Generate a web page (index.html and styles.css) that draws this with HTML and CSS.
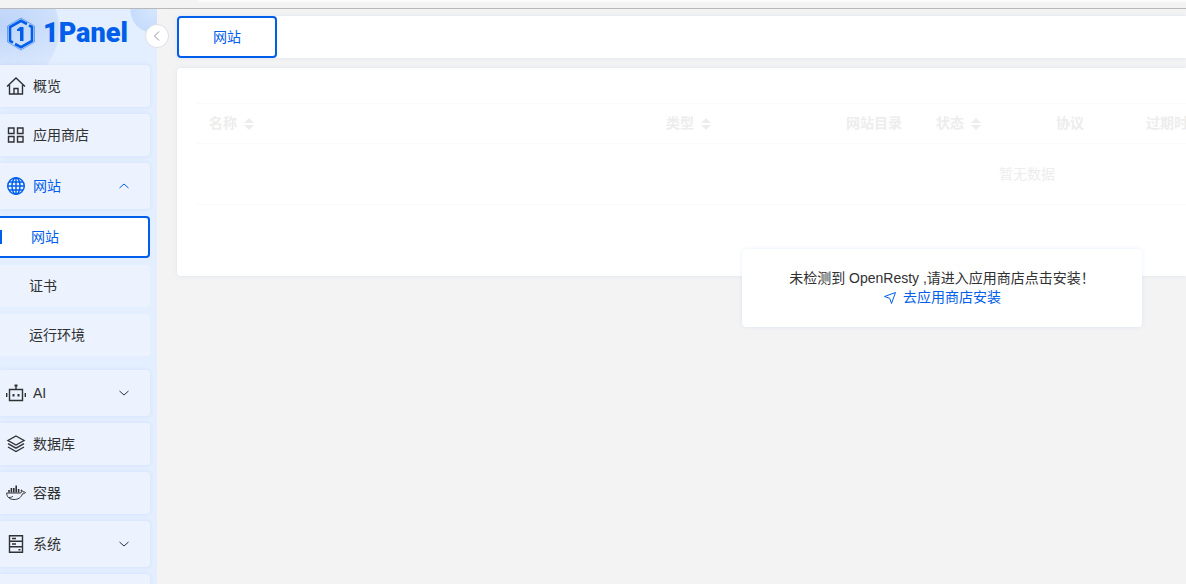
FILE: index.html
```html
<!DOCTYPE html>
<html lang="zh-CN">
<head>
  <meta charset="UTF-8" />
  <meta name="viewport" content="width=device-width, initial-scale=1" />
  <title>网站 - 1Panel</title>
  <link rel="stylesheet" href="styles.css">
</head>
<body>
  <div class="topbar"><div class="topbar-field"></div></div>

  <div class="app">
    <aside class="sidebar">
      <a class="logo" href="#">
        <svg width="30" height="34" viewBox="0 0 30 34" fill="none" stroke="#005eeb">
          <path d="M15 1 28.500 9V25L15 33 1.500 25V9Z" stroke-width=".8" opacity=".6" />
          <path d="M21 7 15 3.800 4 10V24L7 25.700" stroke-width="2.600" />
          <path d="M9 27 15 30.200 26 24V10L23 8.300" stroke-width="2.600" />
          <path d="M11 12.500 14 10H17.500V24H14V14H11Z" fill="#005eeb" stroke="none" />
        </svg>
        <span>1Panel</span>
      </a>
      <button class="collapse" type="button" aria-label="收起菜单">
        <svg width="12" height="12" viewBox="0 0 12 12"><path d="M8 1.500 3.500 6 8 10.500" /></svg>
      </button>

      <nav class="menu">
        <a class="item" href="#">
          <svg class="icon" viewBox="0 0 20 20"><path d="M1 10.500 10 2l9 8.500M3.500 9v9h13V9M8 18v-5.500h4V18" /></svg>
          <span>概览</span>
        </a>
        <a class="item" href="#">
          <svg class="icon" viewBox="0 0 20 20"><path d="M2.500 3h5.500v5.500H2.500zM11.500 3H17v5.500h-5.500zM2.500 11.500h5.500V17H2.500zM11.500 11.500H17V17h-5.500z" /></svg>
          <span>应用商店</span>
        </a>
        <a class="item parent active" href="#">
          <svg class="icon" viewBox="0 0 20 20"><circle cx="10" cy="10" r="8.300" /><ellipse cx="10" cy="10" rx="4" ry="8.300" /><path d="M10 1.700v16.600M1.700 10h16.600M3 6h14M3 14h14" /></svg>
          <span>网站</span>
          <svg class="arrow" viewBox="0 0 12 12"><path d="M1.500 8 6 4l4.500 4" /></svg>
        </a>
        <div class="submenu">
          <a class="item sub current" href="#">网站</a>
          <a class="item sub" href="#">证书</a>
          <a class="item sub" href="#">运行环境</a>
        </div>
        <a class="item parent" href="#">
          <svg class="icon" viewBox="0 0 20 20"><path d="M3.500 6.500h13v11h-13zM10 6.500V2M.700 10v4M19.300 10v4" /><path d="M8.500 1.500h3v2h-3zM6.500 11h2v2.500h-2zM11.500 11h2v2.500h-2z" class="solid" /></svg>
          <span>AI</span>
          <svg class="arrow" viewBox="0 0 12 12"><path d="M1.500 4 6 8l4.500-4" /></svg>
        </a>
        <a class="item" href="#">
          <svg class="icon" viewBox="0 0 20 20"><path d="M10 2 18 6.500 10 11 2 6.500ZM2 9.700l8 4.500 8-4.500M2 13l8 4.500 8-4.500" /></svg>
          <span>数据库</span>
        </a>
        <a class="item" href="#">
          <svg class="icon thin" viewBox="0 0 20 20"><path class="solid" d="M2.200 7h1.600v2.500H2.200zM4.600 5h1.600v4.500H4.600zM7 5h1.600v4.500H7zM9.400 2.500H11v7H9.400zM11.800 6h1.600v3.500h-1.600z" /><path d="M.700 10h13.500c1.500 0 1.500-1.500.8-3 1.500.3 2 1.300 2 2 1-.3 1.800 0 2.500.5-.8 1-1.700 1.300-3 1.300-1.500 4-4.500 5.700-8.500 5.700C3.500 16.500.7 14 .7 10ZM3 14.500c2 0 3-.5 4-1.300" /></svg>
          <span>容器</span>
        </a>
        <a class="item parent" href="#">
          <svg class="icon" viewBox="0 0 20 20"><path d="M3.500 1.700h13v16.600h-13zM3.500 7.200h13M3.500 12.800h13M6 4.500h4M6 10h4" /><path class="solid" d="M12.500 15h2v1.500h-2z" /></svg>
          <span>系统</span>
          <svg class="arrow" viewBox="0 0 12 12"><path d="M1.500 4 6 8l4.500-4" /></svg>
        </a>
        <a class="item" href="#" aria-label="更多"></a>
      </nav>
    </aside>

    <main class="main">
      <div class="tabs">
        <button class="tab" type="button">网站</button>
      </div>

      <section class="card">
        <table class="table">
          <colgroup>
            <col class="col-name"><col class="col-type"><col class="col-dir"><col class="col-status"><col class="col-protocol"><col>
          </colgroup>
          <thead>
            <tr>
              <th>名称<span class="sort"></span></th>
              <th>类型<span class="sort"></span></th>
              <th>网站目录</th>
              <th>状态<span class="sort"></span></th>
              <th>协议</th>
              <th>过期时间</th>
            </tr>
          </thead>
          <tbody>
            <tr><td colspan="6">暂无数据</td></tr>
          </tbody>
        </table>
      </section>

      <div class="prompt">
        <div>未检测到 OpenResty ,请进入应用商店点击安装！</div>
        <a href="#">
          <svg width="14" height="14" viewBox="0 0 14 14"><path d="M1.500 5.500 12.500 1.500 8.500 12.500 6.700 7.300Z" /></svg>
          <span>去应用商店安装</span>
        </a>
      </div>
    </main>
  </div>
</body>
</html>
```

FILE: styles.css
```css
* {
  box-sizing: border-box;
}

body {
  display: flex;
  flex-direction: column;
  height: 100vh;
  margin: 0;
  overflow: hidden;
  background: #f3f3f3;
  color: #303133;
  font-family: "Liberation Sans", "Noto Sans CJK SC", sans-serif;
  font-size: 14px;
  line-height: 19px;
}

a {
  color: inherit;
  text-decoration: none;
}

svg {
  flex: none;
}

.topbar {
  flex: none;
  height: 9px;
  padding-left: 198px;
  border-bottom: 1px solid #b8b8b8;
}

.topbar-field {
  height: 2px;
  background: #fafafa;
}

.app {
  display: flex;
  flex: 1;
  min-height: 0;
}

/* Sidebar */
.sidebar {
  position: relative;
  flex: none;
  width: 157px;
  background:
    radial-gradient(circle at 153px 1px, #d5e5fd 0, #c6dcfc 22px, transparent 23px),
    linear-gradient(#e3eefe00 20px, #e3eefe 90px),
    radial-gradient(circle at 0 20px, #bdd4f9 0, #cfe0fb 58px, transparent 60px),
    #e3eefe;
}

.logo {
  display: flex;
  align-items: center;
  gap: 7px;
  height: 49px;
  padding-left: 6px;
  color: #005eeb;
  font-family: Roboto, sans-serif;
  font-size: 27px;
  font-weight: 900;
}

.collapse {
  position: absolute;
  top: 15px;
  right: -12px;
  z-index: 2;
  display: flex;
  align-items: center;
  justify-content: center;
  width: 24px;
  height: 24px;
  padding: 0;
  border: 1px solid #dcdfe6;
  border-radius: 50%;
  background: #fff;
}

.collapse path {
  fill: none;
  stroke: #909399;
}

.menu {
  display: flex;
  flex-direction: column;
  gap: 7px;
  height: calc(100% - 49px);
  padding: 7px 7px 0 0;
  overflow: hidden;
}

.item {
  display: flex;
  flex: none;
  align-items: center;
  gap: 7px;
  height: 42px;
  padding: 0 20px 0 6px;
  border-radius: 0 4px 4px 0;
  background: #ecf3fe;
  box-shadow: 0 0 4px rgba(0, 94, 235, 0.08);
}

.parent {
  height: 46px;
}

.active,
.current {
  color: #005eeb;
}

.submenu {
  display: flex;
  flex: none;
  flex-direction: column;
  gap: 7px;
  padding-bottom: 7px;
}

.sub {
  padding-left: 29px;
  box-shadow: none;
}

.current {
  position: relative;
  padding-left: 31px;
  border: 2px solid #005eeb;
  border-left: 0;
  background: #fff;
}

.current::before {
  position: absolute;
  left: 0;
  width: 2px;
  height: 14px;
  background: #005eeb;
  content: "";
}

.icon {
  width: 20px;
  height: 20px;
  fill: none;
  stroke: currentColor;
  stroke-width: 1.4;
}

.thin {
  stroke-width: 1;
}

.solid {
  fill: currentColor;
  stroke: none;
}

.arrow {
  width: 12px;
  height: 12px;
  margin-left: auto;
  fill: none;
  stroke: currentColor;
}

/* Content */
.main {
  position: relative;
  flex: 1;
  min-width: 0;
  padding: 7px 0 0 20px;
}

.tabs {
  height: 42px;
  background: #fff;
  box-shadow: 0 0 4px rgba(0, 94, 235, 0.1);
}

.tab {
  width: 100px;
  height: 42px;
  padding: 0;
  border: 2px solid #005eeb;
  border-radius: 4px;
  background: #fff;
  color: #005eeb;
  font: inherit;
}

.card {
  margin-top: 10px;
  padding: 35px 0 71px 20px;
  overflow: hidden;
  border-radius: 4px 0 0 4px;
  background: #fff;
  box-shadow: 0 0 4px rgba(0, 94, 235, 0.1);
}

.table {
  width: 1660px;
  border-collapse: collapse;
  border-top: 1px solid #fafafa;
  color: #ededed;
  table-layout: fixed;
}

.table th,
.table td {
  height: 40px;
  padding: 0 12px;
  border-bottom: 1px solid #fafafa;
  text-align: left;
}

.table td {
  height: 61px;
  text-align: center;
}

.col-name {
  width: 457px;
}

.col-type {
  width: 180px;
}

.col-dir,
.col-protocol {
  width: 90px;
}

.col-status {
  width: 120px;
}

.sort {
  display: inline-flex;
  flex-direction: column;
  gap: 2px;
  margin-left: 7px;
  vertical-align: middle;
}

.sort::before,
.sort::after {
  border: 5px solid transparent;
  content: "";
}

.sort::before {
  border-top: 0;
  border-bottom-color: #ededed;
}

.sort::after {
  border-bottom: 0;
  border-top-color: #ededed;
}

.prompt {
  position: absolute;
  top: 240px;
  right: 44px;
  width: 400px;
  padding: 20px;
  border-radius: 4px;
  background: #fff;
  box-shadow: 0 0 4px rgba(0, 94, 235, 0.1);
  text-align: center;
}

.prompt a {
  display: flex;
  align-items: center;
  justify-content: center;
  gap: 6px;
  color: #005eeb;
}

.prompt path {
  fill: none;
  stroke: currentColor;
}
```
